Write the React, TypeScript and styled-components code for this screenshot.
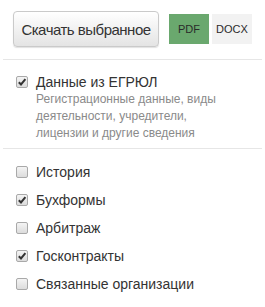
import styled, { createGlobalStyle } from "styled-components"

const GlobalStyle = createGlobalStyle`
    body {
        margin: 0;
        background: #fff;
        font-family: "Liberation Sans", Arial, sans-serif;
        color: #333;
    }
`

const sections = [
    { label: "История", checked: false },
    { label: "Бухформы", checked: true },
    { label: "Арбитраж", checked: false },
    { label: "Госконтракты", checked: true },
    { label: "Связанные организации", checked: false },
]

function Check({ checked }: { checked: boolean }) {
    return <Box>
        {checked && (
            <svg width="10" height="10" viewBox="0 0 10 10">
                <path d="M1.8 5.2 L4 7.4 L8.4 2.2" fill="none" stroke="#333" strokeWidth="2" />
            </svg>
        )}
    </Box>
}

export default function App() {
    return <Wrapper>
        <GlobalStyle />
        <Toolbar>
            <DownloadButton>Скачать выбранное</DownloadButton>
            <Formats>
                <Format active>PDF</Format>
                <Format>DOCX</Format>
            </Formats>
        </Toolbar>
        <Main>
            <Row>
                <Check checked />
                <div>
                    <Title>Данные из ЕГРЮЛ</Title>
                    <Description>
                        Регистрационные данные, виды деятельности, учредители, лицензии и другие сведения
                    </Description>
                </div>
            </Row>
        </Main>
        <List>
            {sections.map((s) => (
                <Item key={s.label}>
                    <Check checked={s.checked} />
                    <Label>{s.label}</Label>
                </Item>
            ))}
        </List>
    </Wrapper>
}

const Wrapper = styled.div`
    width: 259px;
    padding: 0 3px;
`
const Toolbar = styled.div`
    display: flex;
    align-items: center;
    gap: 10px;
    padding: 11px 10px 12px;
    border-bottom: 1px solid #e6e6e6;
`
const DownloadButton = styled.button`
    height: 36px;
    width: 147px;
    padding: 0;
    border: 1px solid #cacaca;
    border-radius: 4px;
    background: linear-gradient(#ffffff, #e4e4e4);
    box-shadow: 0 1px 1px rgba(0, 0, 0, 0.12);
    font-family: "Liberation Sans", Arial, sans-serif;
    font-size: 15px;
    letter-spacing: -0.5px;
    color: #333;
`
const Formats = styled.div`
    display: flex;
    gap: 3px;
`
const Format = styled.div<{ active?: boolean }>`
    width: 40px;
    height: 30px;
    display: flex;
    align-items: center;
    justify-content: center;
    font-size: 11px;
    color: #2b2b2b;
    background: ${(p) => (p.active ? "#6aa86e" : "#f2f2f2")};
`
const Main = styled.div`
    padding: 14px 0 6px 13px;
    border-bottom: 1px solid #e6e6e6;
`
const Row = styled.div`
    display: flex;
    align-items: flex-start;
    gap: 8px;
`
const Box = styled.span`
    flex: none;
    width: 10px;
    height: 10px;
    margin-top: 2px;
    border: 1px solid #a9a9a9;
    border-radius: 2px;
    background: linear-gradient(#f4f4f4, #dcdcdc);
    display: flex;
    align-items: center;
    justify-content: center;
`
const Title = styled.div`
    font-size: 14px;
    line-height: 16px;
`
const Description = styled.div`
    margin-top: 1px;
    font-size: 12px;
    line-height: 17px;
    color: #8a8a8a;
    width: 195px;
`
const List = styled.div`
    padding: 9px 0 0 13px;
`
const Item = styled.div`
    height: 28px;
    display: flex;
    align-items: center;
    gap: 8px;
    & > span {
        margin-top: 0;
    }
`
const Label = styled.span`
    font-size: 14px;
`
